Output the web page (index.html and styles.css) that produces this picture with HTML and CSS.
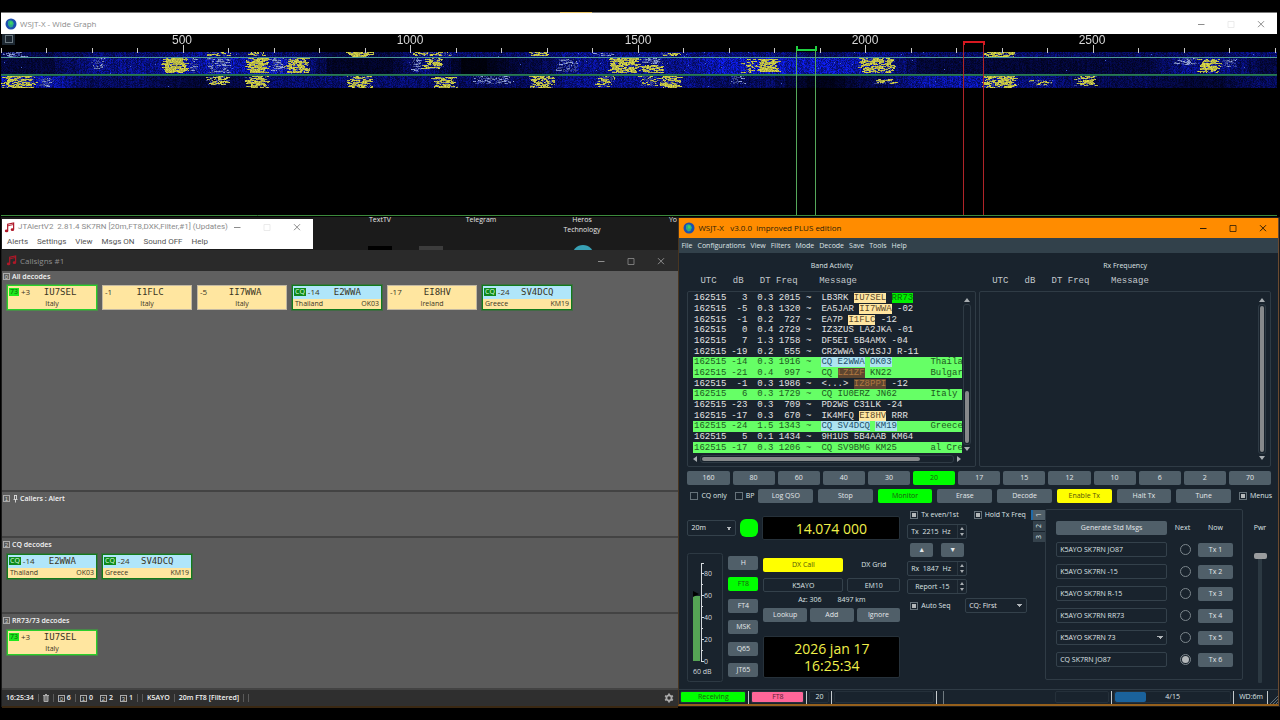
FILE: index.html
```html
<!DOCTYPE html>
<html lang="en">
<head>
<meta charset="utf-8">
<title>WSJT-X</title>
<link rel="stylesheet" href="styles.css">
</head>
<body>
<svg class="defs" aria-hidden="true">
  <symbol id="globe" viewBox="0 0 12 12"><circle cx="6" cy="6" r="5.5" fill="#1d4fb0"/><path d="M3 3.5Q5 1.5 7.500 3L9 5.500 7.500 9 5 9.500 3 7Z" fill="#2aa88a"/><path d="M5 3.500h2.500v3H5z" fill="#3fd060"/></symbol>
  <symbol id="note" viewBox="0 0 12 12"><path d="M4 9.500V2.500L10.500 1V8" fill="none" stroke="currentColor" stroke-width="1.300"/><path d="M4 4.200L10.500 2.700" stroke="currentColor"/><ellipse cx="2.800" cy="9.800" rx="1.900" ry="1.500" fill="currentColor"/><ellipse cx="9.200" cy="8.400" rx="1.900" ry="1.500" fill="currentColor"/></symbol>
  <symbol id="min" viewBox="0 0 8 8"><path d="M1 4.500H7.500" stroke="currentColor"/></symbol>
  <symbol id="max" viewBox="0 0 8 8"><path d="M1 1.500H7V7.500H1Z" fill="none" stroke="currentColor" stroke-width=".8"/></symbol>
  <symbol id="close" viewBox="0 0 8 8"><path d="M1 1.200L7 7.200M7 1.200L1 7.200" stroke="currentColor"/></symbol>
</svg>
<main class="desktop">
  <section class="wallpaper">
    <div class="shortcut s1"><span>TextTV</span><i class="tile black"></i></div>
    <div class="shortcut s2"><span>Telegram</span></div>
    <div class="shortcut s3"><span>Heros<br>Technology</span><i class="orb"></i></div>
    <div class="shortcut s4"><span>Yo</span></div>
    <i class="tile grey"></i>
  </section>

  <section class="window graph">
    <header class="titlebar light">
      <svg class="app"><use href="#globe"/></svg><h1>WSJT-X - Wide Graph</h1><i class="peek"></i>
      <button class="wb" aria-label="Minimize"><svg><use href="#min"/></svg></button><button class="wb faint" aria-label="Maximize"><svg><use href="#max"/></svg></button><button class="wb" aria-label="Close"><svg><use href="#close"/></svg></button>
    </header>
    <div class="plot">
      <canvas id="fall" width="1276" height="36"></canvas>
      <svg class="overlay" viewBox="0 0 1276 182" preserveAspectRatio="none">
        <rect x="1" y="0" width="13" height="11" fill="#1c2731"/><rect x="4.500" y="1.500" width="7" height="7" fill="#18222c" stroke="#6b7880"/>
        <g id="ticks" stroke="#c8c8c8"></g>
        <g class="scale"><text x="181" y="10">500</text><text x="409" y="10">1000</text><text x="637" y="10">1500</text><text x="864" y="10">2000</text><text x="1091" y="10">2500</text></g>
        <path d="M0 23.500H1276" stroke="#4e9a94"/><path d="M0 40.500H1276" stroke="#2a7a52"/><path d="M0 41.500H1276" stroke="#1e6a50"/>
        <path d="M795.500 17V182M814.500 17V182" stroke="#55a85a"/><path d="M796 12V16H815V12" fill="none" stroke="#20d040" stroke-width="2"/>
        <path d="M962.500 10V182M982.500 10V182" stroke="#b02428"/><path d="M963 11V8H983V11" fill="none" stroke="#d81820" stroke-width="2"/>
        <path d="M0 181.500H1276" stroke="#3c8a3c"/>
      </svg>
    </div>
  </section>

  <section class="window jt">
    <header class="titlebar light">
      <svg class="app red"><use href="#note"/></svg><h1>JTAlertV2&nbsp; 2.81.4 SK7RN [20m,FT8,DXK,Filter,#1] (Updates)</h1>
      <button class="wb" aria-label="Minimize"><svg><use href="#min"/></svg></button><button class="wb faint" aria-label="Maximize"><svg><use href="#max"/></svg></button><button class="wb" aria-label="Close"><svg><use href="#close"/></svg></button>
    </header>
    <nav class="menu"><button>Alerts</button><button>Settings</button><button>View</button><button>Msgs ON</button><button>Sound OFF</button><button>Help</button></nav>
  </section>

  <section class="window calls">
    <header class="titlebar dark">
      <svg class="app red"><use href="#note"/></svg><h1>Callsigns #1</h1>
      <button class="wb" aria-label="Minimize"><svg><use href="#min"/></svg></button><button class="wb" aria-label="Maximize"><svg><use href="#max"/></svg></button><button class="wb" aria-label="Close"><svg><use href="#close"/></svg></button>
    </header>
    <section class="group all"><h2><b class="num">0</b>All decodes</h2>
      <div class="cards">
        <article class="card lime"><span class="tag t73">73</span><span class="snr">+3</span><strong>IU7SEL</strong><p>Italy</p></article>
        <article class="card"><span class="snr">-1</span><strong>I1FLC</strong><p>Italy</p></article>
        <article class="card"><span class="snr">-5</span><strong>II7WWA</strong><p>Italy</p></article>
        <article class="card cq"><span class="tag">CQ</span><span class="snr">-14</span><strong>E2WWA</strong><p><span>Thailand</span><span>OK03</span></p></article>
        <article class="card"><span class="snr">-17</span><strong>EI8HV</strong><p>Ireland</p></article>
        <article class="card cq"><span class="tag">CQ</span><span class="snr">-24</span><strong>SV4DCQ</strong><p><span>Greece</span><span>KM19</span></p></article>
      </div>
    </section>
    <section class="group callers"><h2><b class="num">1</b><svg class="pin" viewBox="0 0 5 8"><path d="M1 .5H4M1.500 .5V4M3.500 .5V4M.5 4.500H4.500M2.500 4.500V7.500" stroke="#eee" fill="none" stroke-width=".8"/></svg>Callers : Alert</h2></section>
    <section class="group mid-g"><h2><b class="num">2</b>CQ decodes</h2>
      <div class="cards">
        <article class="card cq"><span class="tag">CQ</span><span class="snr">-14</span><strong>E2WWA</strong><p><span>Thailand</span><span>OK03</span></p></article>
        <article class="card cq"><span class="tag">CQ</span><span class="snr">-24</span><strong>SV4DCQ</strong><p><span>Greece</span><span>KM19</span></p></article>
      </div>
    </section>
    <section class="group mid-g"><h2><b class="num">3</b>RR73/73 decodes</h2>
      <div class="cards"><article class="card lime"><span class="tag t73">73</span><span class="snr">+3</span><strong>IU7SEL</strong><p>Italy</p></article></div>
    </section>
    <footer class="cstatus">
      <span>16:25:34</span><i></i><svg class="bin" viewBox="0 0 6 8"><path d="M0 1.500H6M2 .5H4M1 2V7.500H5V2" stroke="#aaa" fill="#777"/></svg><i></i>
      <span><b class="num">0</b>6</span><i></i><span><b class="num">1</b>0</span><span class="wide"><b class="num">2</b>2</span><span class="wide"><b class="num">3</b>1</span><i></i><i></i><span>K5AYO</span><i></i><span>20m FT8 [Filtered]</span><i></i><i></i>
      <svg class="gear" viewBox="0 0 10 10"><circle cx="5" cy="5" r="2.600" fill="none" stroke="#aaa" stroke-width="1.800"/><path d="M5 .5V2M5 8V9.500M1.100 2.750L2.400 3.500M7.600 6.500L8.900 7.250M1.100 7.250L2.400 6.500M7.600 3.500L8.900 2.750" stroke="#aaa" stroke-width="1.800"/></svg>
    </footer>
  </section>

  <section class="window wsjt">
    <header class="titlebar orange">
      <svg class="app"><use href="#globe"/></svg><h1>WSJT-X&nbsp;&nbsp; v3.0.0&nbsp; improved PLUS edition</h1>
      <button class="wb" aria-label="Minimize"><svg><use href="#min"/></svg></button><button class="wb" aria-label="Maximize"><svg><use href="#max"/></svg></button><button class="wb" aria-label="Close"><svg><use href="#close"/></svg></button>
    </header>
    <nav class="qmenu"><button>File</button><button>Configurations</button><button>View</button><button>Filters</button><button>Mode</button><button>Decode</button><button>Save</button><button>Tools</button><button>Help</button></nav>
    <div class="qbody">
      <div class="panes">
        <section class="pane left">
          <h2>Band Activity</h2>
          <div class="cols">UTC   dB   DT Freq    Message</div>
          <div class="box">
            <div class="clip">
              <table class="decodes">
                <tr><td>162515<td>3<td>0.3<td>2015<td>~<td>LB3RK <mark>IU7SEL</mark> <mark class="lime">RR73</mark><td></tr>
                <tr><td>162515<td>-5<td>0.3<td>1320<td>~<td>EA5JAR <mark>II7WWA</mark> -02<td></tr>
                <tr><td>162515<td>-1<td>0.2<td>727<td>~<td>EA7P <mark>I1FLC</mark> -12<td></tr>
                <tr><td>162515<td>0<td>0.4<td>2729<td>~<td>IZ3ZUS LA2JKA -01<td></tr>
                <tr><td>162515<td>7<td>1.3<td>1758<td>~<td>DF5EI 5B4AMX -04<td></tr>
                <tr><td>162515<td>-19<td>0.2<td>555<td>~<td>CR2WWA SV1SJJ R-11<td></tr>
                <tr class="g"><td>162515<td>-14<td>0.3<td>1916<td>~<td><mark class="sky">CQ E2WWA</mark> <mark class="sky">OK03</mark><td>Thaila</tr>
                <tr class="g"><td>162515<td>-21<td>0.4<td>997<td>~<td>CQ <mark class="brown">LZ1ZF</mark> KN22<td>Bulgar</tr>
                <tr><td>162515<td>-1<td>0.3<td>1986<td>~<td>&lt;...&gt; <mark class="brown">IZ8PPI</mark> -12<td></tr>
                <tr class="g"><td>162515<td>6<td>0.3<td>1729<td>~<td>CQ IU0ERZ JN62<td>Italy</tr>
                <tr><td>162515<td>-23<td>0.3<td>709<td>~<td>PD2WS C31LK -24<td></tr>
                <tr><td>162515<td>-17<td>0.3<td>670<td>~<td>IK4MFQ <mark>EI8HV</mark> RRR<td></tr>
                <tr class="g"><td>162515<td>-24<td>1.5<td>1343<td>~<td><mark class="sky">CQ SV4DCQ</mark> <mark class="sky">KM19</mark><td>Greece</tr>
                <tr><td>162515<td>5<td>0.1<td>1434<td>~<td>9H1US 5B4AAB KM64<td></tr>
                <tr class="g"><td>162515<td>-17<td>0.3<td>1206<td>~<td>CQ SV9BMG KM25<td>al Cre</tr>
              </table>
            </div>
            <div class="vbar"><i class="up"></i><div class="track"><b class="part"></b></div><i class="down"></i></div>
            <div class="hbar"><i class="lt"></i><div class="track"><b></b></div><i class="rt"></i></div>
          </div>
        </section>
        <section class="pane right">
          <h2>Rx Frequency</h2>
          <div class="cols">UTC   dB   DT Freq    Message</div>
          <div class="box"><div></div><div class="vbar"><i class="up"></i><div class="track"><b></b></div><i class="down"></i></div></div>
        </section>
      </div>
      <div class="bands"><button class="b">160</button><button class="b">80</button><button class="b">60</button><button class="b">40</button><button class="b">30</button><button class="b on">20</button><button class="b">17</button><button class="b">15</button><button class="b">12</button><button class="b">10</button><button class="b">6</button><button class="b">2</button><button class="b">70</button></div>
      <div class="actions">
        <div class="checks"><label><input type="checkbox">CQ only</label><label><input type="checkbox">BP</label></div>
        <button class="b">Log QSO</button><button class="b">Stop</button><button class="b on">Monitor</button><button class="b">Erase</button><button class="b">Decode</button><button class="b yel">Enable Tx</button><button class="b">Halt Tx</button><button class="b">Tune</button>
        <label class="menus"><input type="checkbox" checked>Menus</label>
      </div>
      <div class="controls">
        <section class="radio">
          <div class="freq"><select aria-label="Band"><option>20m</option></select><i class="led"></i><output class="lcd">14.074 000</output></div>
          <div class="lower">
            <svg class="meter" viewBox="0 0 36 129">
              <rect x=".5" y=".5" width="35" height="128" rx="2" fill="none" stroke="#2d3943"/>
              <rect x="6" y="43" width="7" height="65" fill="#55a455"/><path d="M6 38L12 41 6 44Z" fill="#000"/>
              <path d="M14.500 10V108M14 10.500H17M14 20.500H17M14 31.500H16M14 42.500H17M14 53.500H16M14 64.500H17M14 75.500H16M14 86.500H17M14 97.500H16M14 108.500H17" stroke="#d5dade" fill="none"/>
              <text x="17" y="23">80</text><text x="17" y="45">60</text><text x="17" y="67">40</text><text x="17" y="89">20</text><text x="17" y="111">0</text><text x="6" y="121">60 dB</text>
            </svg>
            <div class="modes"><button class="b">H</button><button class="b on">FT8</button><button class="b">FT4</button><button class="b">MSK</button><button class="b">Q65</button><button class="b">JT65</button></div>
            <div class="dx">
              <div class="two"><label class="yl" for="dxcall">DX Call</label><label for="dxgrid">DX Grid</label><input id="dxcall" value="K5AYO"><input id="dxgrid" value="EM10"></div>
              <p class="az"><span>Az: 306</span><span>8497 km</span></p>
              <div class="three"><button class="b">Lookup</button><button class="b">Add</button><button class="b">Ignore</button></div>
              <output class="lcd clock">2026 jan 17<br>16:25:34</output>
            </div>
          </div>
        </section>
        <section class="txrx">
          <div class="pair"><label><input type="checkbox" checked>Tx even/1st</label><label><input type="checkbox" checked>Hold Tx Freq</label></div>
          <div class="spin"><input aria-label="Tx frequency" value="Tx  2215  Hz"><span><i class="up"></i><i class="down"></i></span></div>
          <div class="arrows"><button class="b" aria-label="Up">▲</button><button class="b" aria-label="Down">▼</button></div>
          <div class="spin"><input aria-label="Rx frequency" value="Rx  1847  Hz"><span><i class="up"></i><i class="down"></i></span></div>
          <div class="spin rep"><input aria-label="Report" value="Report -15"><span><i class="up"></i><i class="down"></i></span></div>
          <div class="seq"><label><input type="checkbox" checked>Auto Seq</label><select aria-label="CQ reply"><option>CQ: First</option></select></div>
        </section>
        <div class="tabs"><button class="sel"><span>1</span></button><button><span>2</span></button><button><span>3</span></button></div>
        <section class="msgs">
          <button class="b">Generate Std Msgs</button><span>Next</span><span>Now</span>
          <input aria-label="Tx 1 message" value="K5AYO SK7RN JO87"><input type="radio" name="next" aria-label="Next 1"><button class="b">Tx 1</button>
          <input aria-label="Tx 2 message" value="K5AYO SK7RN -15"><input type="radio" name="next" aria-label="Next 2"><button class="b">Tx 2</button>
          <input aria-label="Tx 3 message" value="K5AYO SK7RN R-15"><input type="radio" name="next" aria-label="Next 3"><button class="b">Tx 3</button>
          <input aria-label="Tx 4 message" value="K5AYO SK7RN RR73"><input type="radio" name="next" aria-label="Next 4"><button class="b">Tx 4</button>
          <select aria-label="Tx 5 message"><option>K5AYO SK7RN 73</option></select><input type="radio" name="next" aria-label="Next 5"><button class="b">Tx 5</button>
          <input aria-label="Tx 6 message" value="CQ SK7RN JO87"><input type="radio" name="next" aria-label="Next 6" checked><button class="b">Tx 6</button>
        </section>
        <div class="pwr"><label for="pwr">Pwr</label><input id="pwr" type="range" min="0" max="100" value="100"></div>
      </div>
    </div>
    <footer class="qstatus">
      <span class="st rx">Receiving</span><i></i><span class="st mode">FT8</span><i></i><span class="st n">20</span><i></i><span class="st long"></span><i></i><i class="dim"></i><span class="space"></span><span class="st short"></span><i></i><span class="st prog"><b></b>4/15</span><i></i><span class="wd">WD:6m</span><i></i>
      <svg class="grip" viewBox="0 0 8 8"><path d="M0 8L8 0M3 8L8 3M6 8L8 6" stroke="#60707a"/></svg>
    </footer>
  </section>
</main>
<script src="waterfall.js"></script>
</body>
</html>
```
FILE: styles.css
```css
* { box-sizing: border-box; }
body { margin: 0; background: #000; font: 8px/10px "Open Sans", "Noto Sans", sans-serif; color: #dfe3e6; }
h1, h2, p { margin: 0; font: inherit; }
button, input, select { font: inherit; color: inherit; margin: 0; padding: 0; border: 0; background: none; min-width: 0; }
.defs { position: absolute; width: 0; height: 0; }
.desktop { position: relative; min-height: 720px; height: 100vh; overflow: hidden; background: #000; }
.window { position: absolute; display: flex; flex-direction: column; }

/* wallpaper */
.wallpaper { position: absolute; top: 217px; bottom: 13px; left: 1px; right: 0; background: #1b1b1b; }
.shortcut { position: absolute; top: -2px; width: 70px; text-align: center; color: #e6e6e6; font-size: 7px; }
.s1 { left: 344px; }
.s2 { left: 445px; }
.s3 { left: 546px; }
.s4 { left: 637px; }
.tile { position: absolute; top: 29px; width: 24px; height: 10px; }
.tile.black { left: 23px; top: 31px; background: #000; }
.tile.grey { left: 418px; background: #3c3c3c; }
.orb { position: absolute; left: 25px; top: 30px; width: 22px; height: 22px; border-radius: 50%; background: #38a0b4; }

/* title bars */
.titlebar { display: flex; align-items: center; flex: none; height: 21px; }
.titlebar h1 { flex: 1; min-width: 0; white-space: nowrap; }
.app { flex: none; width: 12px; height: 12px; margin: 0 3px 0 4px; }
.app.red { color: #b01828; width: 11px; height: 11px; }
.wb { flex: none; width: 30px; height: 20px; display: grid; place-items: center; }
.wb svg { width: 8px; height: 8px; }
.light { background: #fff; color: #8c8c8c; }
.light .faint { color: #e6e6e6; }
.dark { background: #2a2a2a; color: #8e8e8e; }
.orange { background: #ff8c00; color: #2b1d08; height: 20px; }

/* wide graph */
.graph { left: 1px; right: 3px; top: 12px; height: 204px; border-top: 1px solid #777; }
.graph .titlebar { position: relative; padding-right: 1px; }
.peek { position: absolute; left: 559px; top: -1px; width: 32px; height: 1px; background: #e8c468; }
.plot { position: relative; flex: 1; background: #000; }
#fall { position: absolute; left: 0; top: 18px; width: 100%; height: 36px; }
.overlay { position: absolute; width: 100%; height: 100%; }
.scale text { font: 12px "Liberation Sans", sans-serif; fill: #d8d8d8; text-anchor: middle; }

/* JTAlert */
.jt { left: 2px; top: 219px; width: 311px; height: 30px; background: #fff; color: #777; z-index: 2; font-family: Roboto, "Open Sans", sans-serif; }
.jt .titlebar { height: 16px; padding-right: 1px; }
.jt .app { margin-left: 2px; }
.menu { display: flex; gap: 9px; padding: 2px 5px; color: #555; }

/* callsigns */
.calls { left: 2px; width: calc(53% - 2px); top: 250px; bottom: 12px; background: #5b5b5b; border-bottom: 2px solid #3a2812; }
.calls .titlebar { padding-right: 2px; }
.group { border-bottom: 2px solid #434343; padding: 0 5px; }
.group h2 { display: flex; align-items: center; height: 11px; margin: 0 0 3px -4px; color: #f4f4f4; font-weight: 600; font-size: 7px; }
.all { flex: 1; background: #606060; }
.callers { height: 46px; background: #5e5e5e; padding-top: 1px; }
.mid-g { height: 76px; }
.mid-g h2 { margin-top: 1px; }
.mid-g .cards { padding-top: 1px; }
.num { display: inline-grid; place-items: center; width: 7px; height: 7px; margin-right: 2px; border: 1px solid #aaa; font: 6px/6px "Liberation Sans", sans-serif; color: #ccc; }
.pin { width: 5px; height: 8px; margin: 0 2px 0 1px; }
.cards { display: flex; flex-wrap: wrap; gap: 5px; }
.card { display: grid; grid-template-columns: auto auto 1fr; align-items: center; width: 90px; height: 25px; border: 1px solid #c3b9a3; background: #ffe6a0; color: #3a3524; outline: 1px solid transparent; }
.card.lime { border: 1px solid #2bcf2b; outline-color: #2bcf2b66; }
.card.cq { border: 1px solid #137a1c; outline-color: #137a1c66; background: linear-gradient(#b0e6fa 55%, #ffe6a0 55%); }
.card strong { font: 9px/12px "DejaVu Sans Mono", monospace; text-align: center; padding-right: 3px; grid-column: 3; }
.card .tag + .snr + strong { padding-right: 6px; }
.card p { grid-column: 1 / -1; text-align: center; font-size: 7px; line-height: 10px; display: flex; justify-content: center; padding: 0 2px; }
.card.cq p { justify-content: space-between; }
.tag { grid-column: 1; background: #0e8a1a; color: #dfffe0; font-size: 7px; line-height: 8px; padding: 0 1px; margin-left: 1px; }
.tag.t73 { background: #1ee81e; color: #0a5a0a; }
.snr { grid-column: 2; font-size: 8px; padding-left: 2px; }
.cstatus { display: flex; align-items: center; gap: 4px; height: 16px; padding: 0 4px; background: #2f2f2f; color: #f2f2f2; font-size: 7px; font-weight: 600; }
.cstatus i { width: 1px; height: 8px; background: #5a5a5a; }
.cstatus .wide { margin-left: 3px; }
.cstatus span { display: flex; align-items: center; white-space: nowrap; }
.bin { width: 6px; height: 8px; }
.gear { width: 10px; height: 10px; margin-left: auto; }

/* main window */
.wsjt { left: 53%; right: 1px; top: 218px; bottom: 14px; background: #19232d; border-left: 1px solid #4a3620; border-right: 1px solid #6b4a30; border-bottom: 2px solid #96601c; font-size: 7px; }
.wsjt .titlebar { font-size: 8px; padding-right: 0; }
.qmenu { display: flex; flex: none; align-items: center; gap: 5px; height: 15px; padding-left: 2px; background: #32414b; }
.qbody { flex: 1; display: flex; flex-direction: column; padding: 0 7px 0 8px; }
.panes { display: grid; grid-template-columns: 289fr 292fr; gap: 3px; padding-top: 8px; }
.pane { min-width: 0; }
.pane h2 { text-align: center; }
.cols { margin: 4px 0; padding-left: 13px; white-space: pre; font: 9px/12px "Liberation Mono", monospace; color: #c4cace; }
.box { display: grid; grid-template-columns: 1fr 10px; height: 176px; padding: 1px 3px 2px 5px; border: 1px solid #2f3b45; border-radius: 2px; }
.left .box { grid-template-rows: 160px 12px; }
.right .box { grid-template-rows: 100%; }
.clip { overflow: hidden; }
.decodes { border-spacing: 0; height: 160px; white-space: pre; font: 9px/10px "Liberation Mono", monospace; color: #e4e4e4; table-layout: fixed; width: 100%; }
.decodes td { padding: 0; text-align: right; height: 10px; }
.decodes td:nth-child(1) { width: 33px; }
.decodes td:nth-child(2) { width: 21px; }
.decodes td:nth-child(3) { width: 26px; }
.decodes td:nth-child(4) { width: 27px; }
.decodes td:nth-child(5) { width: 11px; }
.decodes td:nth-child(6) { width: 119px; text-align: left; padding-left: 10px; }
.decodes td:nth-child(7) { text-align: left; }
.decodes .g td { background: #66ff66; color: #1d5a1f; }
.decodes mark { display: inline-block; background: #ffe6a0; color: #5c4a2c; }
.decodes mark.lime { background: #00f000; color: #0a6a0a; }
.decodes mark.sky { background: #aee4f0; color: #22506a; }
.decodes mark.brown { background: #5e4630; color: #b07840; }
.vbar { display: flex; flex-direction: column; align-items: center; gap: 2px; padding: 5px 0 2px; }
.right .vbar { padding: 5px 0 4px; }
.vbar .track { flex: 1; width: 8px; padding: 1px; border: 1px solid #2f3b45; border-radius: 3px; display: flex; align-items: flex-end; }
.vbar b { width: 100%; height: 100%; background: #87898b; border-radius: 2px; }
.vbar b.part { height: 38%; }
.hbar { display: flex; align-items: center; gap: 3px; padding-right: 1px; }
.hbar .track { flex: 1; height: 8px; padding: 1px; border: 1px solid #2f3b45; border-radius: 3px; }
.hbar b { display: block; width: 87%; height: 100%; background: #87898b; border-radius: 2px; }
.up, .down, .lt, .rt { width: 0; height: 0; border: 3px solid transparent; }
.up { border-top: 0; border-bottom: 4px solid #a8adb1; }
.down { border-bottom: 0; border-top: 4px solid #a8adb1; }
.lt { border-left: 0; border-right: 4px solid #a8adb1; }
.rt { border-right: 0; border-left: 4px solid #a8adb1; }

.b { height: 14px; border-radius: 2px; background: #505f69; color: #e4e8ea; text-align: center; line-height: 10px; white-space: nowrap; }
.b.on { background: #00ff00; color: #1c5a10; }
.b.yel { background: #ffff00; color: #55550a; }
.bands { display: grid; grid-template-columns: repeat(13, 1fr); gap: 3px; margin-top: 4px; }
.actions { display: grid; grid-template-columns: 66px repeat(8, 1fr) 35px; gap: 5px; margin-top: 4px; align-items: center; }
label { white-space: nowrap; }
.actions label, .txrx label { display: flex; align-items: center; gap: 3px; }
.checks { display: flex; gap: 8px; padding-left: 3px; }
.menus { padding-left: 3px; }
input[type="checkbox"] { appearance: none; width: 8px; height: 8px; border: 1px solid #66727a; flex: none; display: grid; place-items: center; }
input[type="checkbox"]:checked::after { content: ""; width: 4px; height: 4px; background: #b4b8ba; }
.controls { display: grid; grid-template-columns: 213fr 131fr 14px 198fr 28px; margin-top: 6px; height: 174px; }
.radio { padding-top: 7px; }
.freq { display: flex; align-items: center; gap: 4px; height: 24px; }
select { appearance: none; height: 16px; border: 1px solid #34414b; border-radius: 2px; padding: 0 3px; background: linear-gradient(45deg, transparent 50%, #b0b5b9 50%) right 6px center / 3px 3px no-repeat, linear-gradient(-45deg, transparent 50%, #b0b5b9 50%) right 3px center / 3px 3px no-repeat; color: #e4e8ea; }
.freq select { width: 49px; }
.led { width: 18px; height: 18px; border-radius: 6px; background: #00ff00; }
.lcd { flex: 1; display: grid; place-items: center; height: 24px; border: 1px solid #26313a; border-radius: 2px; background: #000; color: #f0f04a; font: 14px/17px "Open Sans", "Noto Sans", sans-serif; text-align: center; }
.lower { display: grid; grid-template-columns: 36px 30px 1fr; gap: 5px; margin-top: 13px; align-items: start; }
.meter { width: 36px; height: 129px; }
.meter text { font-size: 7px; fill: #d5dade; }
.modes { display: flex; flex-direction: column; justify-content: space-between; height: 121px; margin-top: 3px; }
.dx { margin-top: 5px; }
.two { display: grid; grid-template-columns: 80fr 53fr; gap: 6px 4px; }
.two label { height: 14px; line-height: 14px; text-align: center; }
.two .yl { background: #ffff00; color: #55550a; border-radius: 2px; }
.two input { width: 100%; height: 14px; text-align: center; border: 1px solid #34414b; border-radius: 2px; }
.az { display: flex; justify-content: center; gap: 16px; height: 16px; line-height: 16px; }
.three { display: grid; grid-template-columns: repeat(3, 1fr); gap: 3px; }
.clock { height: 42px; margin-top: 14px; }
.txrx { padding-left: 7px; }
.pair { display: flex; gap: 15px; height: 12px; padding-left: 3px; }
.spin { display: flex; width: 60px; height: 15px; margin-top: 3px; border: 1px solid #34414b; border-radius: 2px; }
.spin input { flex: 1; width: 40px; padding-left: 3px; white-space: pre; }
.spin.rep input { padding-left: 7px; }
.spin span { display: flex; flex-direction: column; justify-content: space-between; padding: 2px; border-left: 1px solid #2b3740; }
.spin .up { border-width: 0 2px 3px; }
.spin .down { border-width: 3px 2px 0; }
.arrows { display: flex; gap: 8px; margin: 4px 3px; }
.arrows .b { width: 23px; }
.seq { display: flex; justify-content: space-between; margin-top: 4px; padding: 0 4px 0 3px; }
.seq select { width: 62px; height: 15px; }
.tabs { display: flex; flex-direction: column; gap: 1px; padding-top: 1px; }
.tabs button { height: 10px; margin-left: 2px; background: #35424c; display: grid; place-items: center; line-height: 8px; }
.tabs .sel { margin-left: 0; background: #505f69; border-left: 2px solid #1f6aa8; }
.tabs span { transform: rotate(-90deg); }
.msgs { display: grid; grid-template-columns: 111fr 31fr 35fr; grid-template-rows: 14px; grid-auto-rows: 15px; gap: 7px 0; align-content: start; place-items: center; height: 171px; padding: 11px 9px 0 10px; border: 1px solid #2f3b45; border-radius: 2px; }
.msgs > * { width: 100%; text-align: center; }
.msgs > input:not([type="radio"]), .msgs select { height: 15px; padding: 0 3px; border: 1px solid #34414b; border-radius: 2px; text-align: left; }
.msgs > input[type="radio"] { appearance: none; width: 11px; height: 11px; margin-left: 6px; border: 1px solid #7c868c; border-radius: 50%; display: grid; place-items: center; }
.msgs > input[type="radio"]:checked::after { content: ""; width: 7px; height: 7px; border-radius: 50%; background: #b4b8ba; }
.pwr { display: flex; flex-direction: column; align-items: center; padding: 14px 0 0 6px; gap: 20px; }
.pwr input { appearance: none; writing-mode: vertical-lr; direction: rtl; width: 14px; height: 130px; }
.pwr input::-webkit-slider-runnable-track { width: 4px; height: 130px; margin: 0 auto; background: #2c3942; border-radius: 1px; }
.pwr input::-webkit-slider-thumb { appearance: none; width: 13px; height: 6px; margin-left: -4px; margin-right: -5px; border-radius: 2px; background: #9a9c9e; }
.qstatus { display: flex; align-items: center; gap: 1px; height: 15px; padding-left: 1px; border-top: 1px solid #2f3b45; white-space: nowrap; }
.qstatus i { width: 1px; height: 13px; background: #c5cacd; margin: 0 1px; }
.qstatus i.dim { background: #707a80; margin-left: 4px; }
.st { height: 12px; line-height: 10px; border: 1px solid #25303a; border-radius: 2px; text-align: center; }
.st.rx { width: 66px; background: #00ff00; color: #1c5a10; }
.st.mode { width: 53px; background: #ff6699; color: #5a2036; }
.st.n { width: 20px; }
.st.long { width: 100px; }
.st.short { width: 54px; }
.space { flex: 1; }
.st.prog { position: relative; width: 117px; }
.prog b { position: absolute; left: 0; top: 0; width: 31px; height: 10px; border-radius: 2px; background: #1a629c; }
.wd { padding: 0 2px 0 3px; }
.grip { width: 8px; height: 8px; align-self: flex-end; }
```
FILE: waterfall.js
```js
// Frequency ruler ticks, one each 100 Hz
var NS = "http://www.w3.org/2000/svg";
var ticks = document.getElementById("ticks");
for (var k = 0; k <= 28; k++) {
  var tx = Math.floor(k * 45.5) + 0.5;
  var t = document.createElementNS(NS, "path");
  t.setAttribute("d", "M" + tx + " " + (k % 5 === 4 ? 11 : 14) + "V19");
  ticks.appendChild(t);
}

// Seeded random numbers keep the waterfall the same on each load
var seed = 7;
function rnd() {
  seed = (seed * 1664525 + 1013904223) >>> 0;
  return seed / 4294967296;
}

var c = document.getElementById("fall");
var g = c.getContext("2d");
var W = 1276, H = 36;
// background level per stretch: [from, to, first period, middle period, last period]
var base = [
  [0, 70, .3, .22, .6], [70, 165, .4, .5, .35], [165, 245, .5, .6, .2], [245, 310, .4, .65, .4],
  [310, 408, .25, .15, .4], [408, 444, .5, .5, .4], [444, 502, .4, .05, .35], [502, 557, .4, .25, .35],
  [557, 700, .5, .5, .5], [700, 790, .45, .7, .35], [790, 850, .35, .7, .1], [850, 900, .5, .6, .3],
  [900, 1000, .4, .22, .6], [1000, 1070, .4, .2, .45], [1070, 1165, .35, .22, .3], [1165, 1240, .35, .5, .2], [1240, 1276, .45, .25, .35]
];
function level(x, p) {
  x = Math.max(0, Math.min(W - 1, x));
  for (var i = 0; i < base.length; i++) if (x < base[i][1]) return base[i][p];
}
// signals: [x0, x1, y0, y1, strength]
var sig = [
  [0, 25, 0, 5, .25], [205, 229, 0, 4, .4], [244, 266, 0, 4, .4], [345, 371, 0, 5, .8], [410, 453, 0, 4, .45],
  [527, 550, 0, 4, .6], [592, 613, 1, 4, .2], [656, 680, 1, 4, .6], [981, 1013, 0, 5, .75],
  [90, 104, 6, 17, .18], [160, 186, 6, 21, .88], [186, 196, 6, 21, .2], [205, 229, 6, 21, .28], [244, 268, 6, 21, .75],
  [268, 283, 6, 21, .28], [283, 307, 6, 21, .65], [408, 421, 6, 20, .25], [421, 443, 6, 17, .5], [555, 577, 7, 20, .25],
  [606, 638, 6, 21, .75], [638, 662, 6, 12, .3], [638, 662, 13, 21, .78], [740, 754, 7, 21, .5], [754, 778, 7, 20, .88],
  [857, 893, 6, 21, .7], [1172, 1196, 6, 13, .18], [1196, 1219, 7, 21, .78], [1219, 1235, 7, 15, .14],
  [0, 35, 24, 36, .6], [35, 52, 26, 35, .2], [205, 229, 23, 33, .42], [244, 268, 23, 36, .75], [346, 370, 23, 36, .62],
  [430, 455, 25, 36, .65], [471, 511, 23, 32, .22], [527, 552, 23, 36, .62], [592, 612, 24, 35, .4], [637, 656, 23, 34, .38],
  [656, 680, 23, 36, .72], [728, 745, 24, 32, .15], [873, 896, 27, 32, .4], [981, 1015, 23, 36, .6],
  [1028, 1050, 28, 34, .32], [1073, 1096, 23, 34, .6]
];
function put(x, y, r, gr, b) {
  g.fillStyle = "rgb(" + (r | 0) + "," + (gr | 0) + "," + (b | 0) + ")";
  g.fillRect(x, y, 1, 1);
}
for (var x = 0; x < W; x++) {
  var col = .85 + rnd() * .3;
  for (var y = 0; y < H; y++) {
    var p = y < 6 ? 2 : y < 23 ? 3 : 4;
    var soft = (level(x - 16, p) + level(x - 6, p) + level(x + 6, p) + level(x + 16, p)) / 4;
    var v = Math.min(1, soft * col * (.55 + rnd() * .8));
    put(x, y, v * 16, v * 34, v * 270);
    if (rnd() < v * .004) put(x, y, 70, 100, 220);
  }
}
sig.forEach(function (s) {
  for (var y = s[2]; y < s[3]; y++) {
    var x = s[0] + Math.floor(rnd() * 7);
    var end = s[1] + 2 - Math.floor(rnd() * 7);
    while (x < end) {
      var run = 1 + Math.floor(rnd() * 4);
      var hot = rnd() < s[4];
      for (var i = 0; i < run && x < end; i++, x++) {
        var n = rnd() * 70;
        if (hot && s[4] > .3) put(x, y, 155 + n, 155 + n, 70);
        else if (hot) put(x, y, 90 + n, 105 + n, 160 + n);
        else if (rnd() < .5) put(x, y, 55, 65, 110 + n);
      }
    }
  }
});
```
